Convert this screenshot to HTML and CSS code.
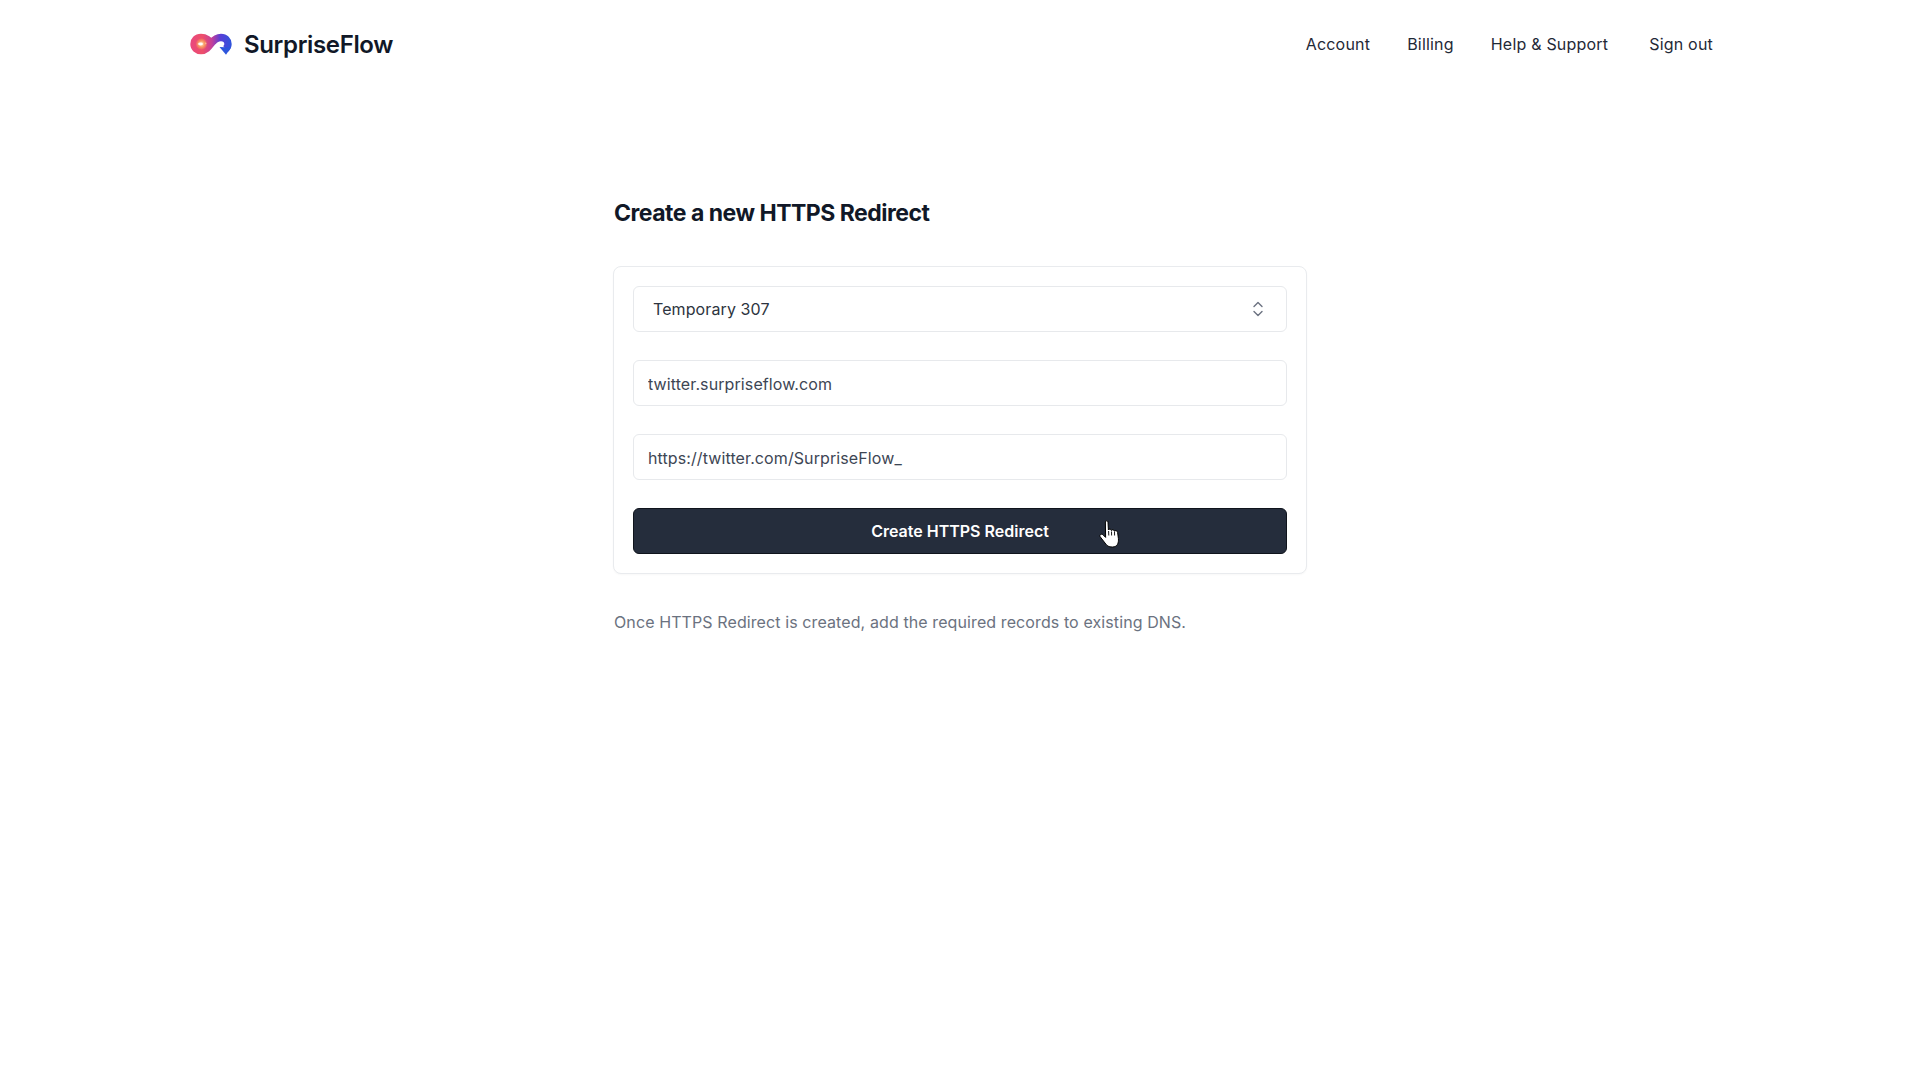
FILE: index.html
```html
<!DOCTYPE html>
<html lang="en">
<head>
<meta charset="utf-8">
<title>SurpriseFlow</title>
<link rel="stylesheet" href="styles.css">
</head>
<body>
<header class="topbar">
  <a class="brand" href="#">
    <svg class="brand-mark" viewBox="0 0 42 22" width="42" height="22" aria-hidden="true">
      <defs>
        <linearGradient id="flow" x1="0" y1="0" x2="42" y2="0" gradientUnits="userSpaceOnUse">
          <stop offset="0" stop-color="#e8487f"/>
          <stop offset="0.3" stop-color="#ee4f6a"/>
          <stop offset="0.52" stop-color="#c43f9a"/>
          <stop offset="0.72" stop-color="#5a3fd6"/>
          <stop offset="1" stop-color="#2d55dc"/>
        </linearGradient>
        <radialGradient id="core" cx="11.5" cy="11" r="6" gradientUnits="userSpaceOnUse">
          <stop offset="0" stop-color="#ffe3b8"/>
          <stop offset="0.55" stop-color="#f9935f"/>
          <stop offset="1" stop-color="#f9935f" stop-opacity="0"/>
        </radialGradient>
      </defs>
      <path d="M23.5 12.5 C20 7.5 16 4.5 11 4.5 C6.5 4.5 4 7.5 4 11 C4 14.8 7 17.5 11 17.5 C16 17.5 18.8 13.5 21.5 10 C24.5 6.2 27.5 4.5 31 4.5 C35.3 4.5 38 7.5 38 11 C38 13 37 14.8 35.5 16" fill="none" stroke="url(#flow)" stroke-width="7.4"/>
      <circle cx="11.5" cy="11" r="6" fill="url(#core)"/>
      <ellipse cx="10.5" cy="11" rx="2.4" ry="1.4" fill="#fff" opacity="0.95"/>
      <path d="M29.5 14 L36 21.8 L41 14.5 Z" fill="#2d55dc"/>
    </svg>
    <span class="brand-name">SurpriseFlow</span>
  </a>
  <nav class="nav">
    <a href="#">Account</a>
    <a href="#">Billing</a>
    <a href="#">Help &amp; Support</a>
    <a class="nav-signout" href="#">Sign out</a>
  </nav>
</header>

<main class="content">
  <h1 class="title">Create a new HTTPS Redirect</h1>
  <form class="card">
    <div class="select-wrap">
      <select class="field field-select">
        <option>Temporary 307</option>
      </select>
      <svg class="select-icon" viewBox="0 0 12 18" width="12" height="18" aria-hidden="true">
        <path d="M2 6.5 L6 2.5 L10 6.5 M2 11.5 L6 15.5 L10 11.5" fill="none" stroke="#6b7280" stroke-width="1.4" stroke-linecap="round" stroke-linejoin="round"/>
      </svg>
    </div>
    <input class="field" type="text" value="twitter.surpriseflow.com">
    <input class="field" type="text" value="https://twitter.com/SurpriseFlow_">
    <div class="submit-wrap">
      <button class="submit" type="button">Create HTTPS Redirect</button>
      <svg class="cursor" viewBox="0 0 23 28" width="23" height="28" aria-hidden="true">
        <path d="M6.4 2 C6.4 0.4 9 0.4 9 2 L9.4 10 C9.8 8.6 12.2 8.7 12.4 10.6 C12.9 9.2 15.2 9.4 15.4 11.3 C16 10.2 18.4 10.4 18.6 12.4 L19.4 18.5 C19.8 23 18.4 27 13.5 27 C9.5 27 8 26 6 23 L1.2 16.8 C0 15 2.4 13.2 4 14.8 L6.6 17.4 Z" fill="#fff" stroke="#000" stroke-width="1" stroke-linejoin="round"/>
        <path d="M9.6 11 L9.8 15.5 M12.5 11.5 L12.6 15.5 M15.5 12 L15.6 15.5" fill="none" stroke="#000" stroke-width="0.9"/>
      </svg>
    </div>
  </form>
  <p class="note">Once HTTPS Redirect is created, add the required records to existing DNS.</p>
</main>
</body>
</html>
```

FILE: styles.css
```css
* { box-sizing: border-box; }

html, body { margin: 0; padding: 0; }

body {
  background: #fff;
  font-family: Inter, "Liberation Sans", sans-serif;
  color: #1f2937;
  min-height: 1080px;
}

a { text-decoration: none; color: inherit; }

.topbar {
  display: flex;
  align-items: center;
  justify-content: space-between;
  height: 88px;
  padding: 0 207px 0 190px;
}

.brand { display: flex; align-items: center; gap: 12px; }

.brand-mark { display: block; filter: blur(0.35px); }

.brand-name {
  font-size: 24px;
  font-weight: 600;
  letter-spacing: -0.35px;
  color: #111827;
}

.nav {
  display: flex;
  align-items: center;
  gap: 37px;
  font-size: 16px;
  letter-spacing: 0.2px;
  color: #1f2937;
}

.nav-signout { margin-left: 4px; }

.content {
  width: 694px;
  margin-left: 613px;
  padding-top: 111px;
}

.title {
  margin: 0 0 39px;
  padding-left: 1px;
  font-size: 23px;
  line-height: 28px;
  font-weight: 700;
  letter-spacing: -0.5px;
  color: #111827;
}

.card {
  display: flex;
  flex-direction: column;
  gap: 28px;
  padding: 19px;
  background: #fff;
  border: 1px solid #e9ebee;
  border-radius: 8px;
  box-shadow: 0 1px 2px rgba(0, 0, 0, 0.03);
}

.field {
  display: block;
  width: 100%;
  height: 46px;
  padding: 1px 14px 0;
  background: #fff;
  border: 1px solid #e7e9ec;
  border-radius: 6px;
  font-family: inherit;
  font-size: 16px;
  letter-spacing: 0.1px;
  color: #3d4654;
  outline: none;
}

.select-wrap { position: relative; }

.field-select {
  appearance: none;
  padding: 0 19px;
  color: #2d3440;
}

.select-icon {
  position: absolute;
  top: 14px;
  right: 23px;
}

.submit-wrap { position: relative; }

.submit {
  display: block;
  width: 100%;
  height: 46px;
  border: 1px solid #0f141c;
  border-radius: 6px;
  background: #252d3c;
  color: #fff;
  font-family: inherit;
  font-size: 16px;
  font-weight: 600;
}

.cursor {
  position: absolute;
  left: 466px;
  top: 12px;
}

.note {
  margin: 38px 0 0;
  padding-left: 1px;
  font-size: 16px;
  line-height: 20px;
  letter-spacing: 0.1px;
  color: #6b7280;
}
```
